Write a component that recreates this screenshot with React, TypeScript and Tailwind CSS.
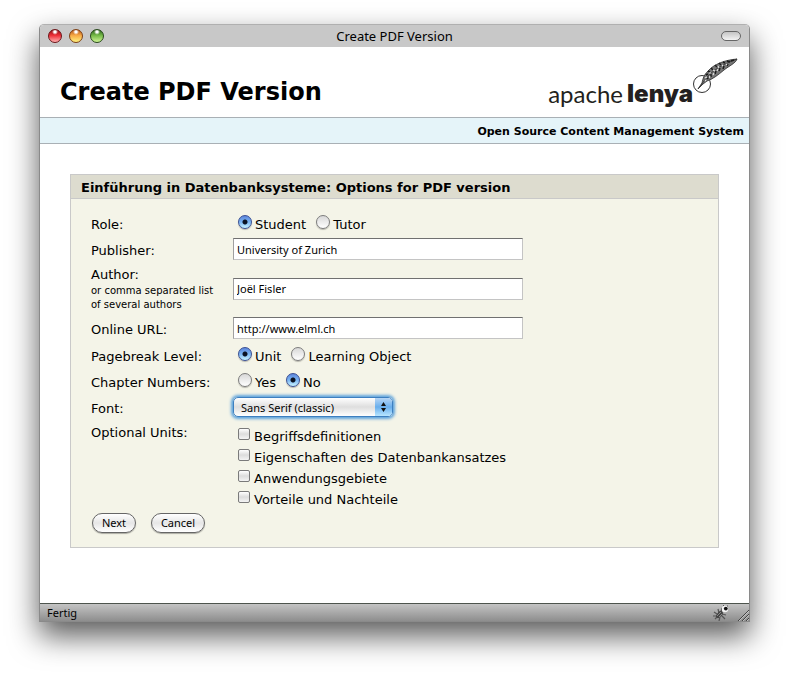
import React, { useState } from "react";

function Radio(props: {
  name: string;
  label: string;
  checked: boolean;
  onSelect: () => void;
}) {
  return (
    <label className="flex items-center gap-[3px] pt-0.5">
      <input
        type="radio"
        name={props.name}
        checked={props.checked}
        onChange={props.onSelect}
        className="mb-1.5 size-3.5 shrink-0 appearance-none rounded-full border border-[#7c7c7c] bg-linear-to-b from-[#d8d8d8] to-white shadow-[0_1px_1px_rgba(0,0,0,0.25)] checked:border-[#3a4f93] checked:bg-[radial-gradient(circle,#0a1222_0_2px,transparent_3px),linear-gradient(#5d86dc,#79b4f2_50%,#c8f4ff)]"
      />
      <span>{props.label}</span>
    </label>
  );
}

function TextBox(props: { id: string; value: string }) {
  const [value, setValue] = useState(props.value);
  return (
    <div className="pb-0.5">
      <input
        id={props.id}
        type="text"
        value={value}
        onChange={(e) => setValue(e.target.value)}
        className="block h-[22px] w-full max-w-[290px] border border-[#c4c4c4] border-t-[#707070] border-l-[#a0a0a0] bg-white px-[3px] font-['Noto_Sans',sans-serif] text-[11px] outline-none"
      />
    </div>
  );
}

function Row(props: {
  label: React.ReactNode;
  children: React.ReactNode;
  className: string;
}) {
  return (
    <div className={`grid grid-cols-[142px_1fr] items-center ${props.className}`}>
      <div className="pt-0.5">{props.label}</div>
      <div className="min-w-0">{props.children}</div>
    </div>
  );
}

function Feather() {
  return (
    <svg viewBox="0 0 48 38" className="h-[38px] w-12" aria-hidden="true">
      <circle cx="11" cy="26" r="8.5" fill="none" stroke="#333" strokeWidth="1" />
      <path
        d="M7 31 L11 25 C12 20 13 17 17 13 C23 6 34 2 46 1 C45 5 38 8 33 12 C27 17 22 21 16 23 L12 26 Z"
        fill="#777"
        stroke="#2b2b2b"
        strokeWidth="0.8"
      />
      <path
        d="M7 31 L13 23 C20 13 30 7 46 1"
        fill="none"
        stroke="#3a3a3a"
        strokeWidth="0.9"
      />
      <path
        d="M15 17l2-1M17 13l2 1M20 10l2 2M24 7l2 2M28 5l2 2M32 4l2 1M36 3l3 1M16 21l2-2M20 19l0-3M24 16l1-3M28 13l1-3M32 11l1-3M36 8l1-2M40 3l3-1"
        stroke="#1d1d1d"
        strokeWidth="1.5"
      />
      <path
        d="M14 20l2-1M18 15l2 0M22 12l2 1M18 20l1-2M22 17l1-2M27 8l1 2M26 13l1-2M31 7l1 1M14 23l1-1M35 6l1 1"
        stroke="#e6e6e6"
        strokeWidth="1.1"
      />
    </svg>
  );
}

function Bug() {
  return (
    <svg viewBox="0 0 16 16" className="size-4" aria-hidden="true">
      <path
        d="M1 7l3 2M0 11h4M2 14l3-3M5 4l1 4M9 3l-1 4M13 10l-4-1M12 14l-4-4M6 16l1-4"
        stroke="#555"
        strokeWidth="1.2"
      />
      <ellipse cx="6.5" cy="9.5" rx="2.4" ry="4.2" transform="rotate(42 6.5 9.5)" fill="#444" />
      <path d="M4 11l4-4M6 12l3-3" stroke="#999" strokeWidth="0.8" />
      <circle cx="12" cy="4" r="3.2" fill="#f5f5f5" />
      <circle cx="12.8" cy="3.6" r="1.9" fill="#111" />
      <path d="M10 1l1-1M14 1l1 0" stroke="#555" />
    </svg>
  );
}

const units = [
  "Begriffsdefinitionen",
  "Eigenschaften des Datenbankansatzes",
  "Anwendungsgebiete",
  "Vorteile und Nachteile",
];

const lights = [
  {
    name: "Close",
    style:
      "border-[#6d1418] bg-[radial-gradient(circle_at_50%_15%,#fff_0_1px,transparent_3px),linear-gradient(#8e1218,#ee2f38_45%,#ffb0b0)]",
  },
  {
    name: "Minimize",
    style:
      "border-[#7d3f12] bg-[radial-gradient(circle_at_50%_15%,#fff_0_1px,transparent_3px),linear-gradient(#b4531a,#f7a945_45%,#fff27e)]",
  },
  {
    name: "Zoom",
    style:
      "border-[#27491a] bg-[radial-gradient(circle_at_50%_15%,#fff_0_1px,transparent_3px),linear-gradient(#2f641f,#74b947_45%,#cff596)]",
  },
];

const pushButton =
  "h-5 rounded-full border border-[#666] bg-linear-to-b from-white via-[#e6e6e6] to-white text-center font-['Noto_Sans',sans-serif] text-[11px] leading-[18px] shadow-[0_1px_1px_rgba(0,0,0,0.3)]";

export default function App() {
  const [role, setRole] = useState("Student");
  const [level, setLevel] = useState("Unit");
  const [chapters, setChapters] = useState("No");

  return (
    <div className="min-h-screen bg-white px-[39px] pt-6 pb-[54px] font-['DejaVu_Sans',Verdana,sans-serif] text-[13px] leading-5 text-black">
      <div className="rounded-t-[5px] border border-[#8a8a8a] border-t-[#b0b0b0] bg-white shadow-[0_14px_30px_rgba(0,0,0,0.65)]">
        <div className="grid h-[22px] grid-cols-[1fr_auto_1fr] items-center rounded-t-[4px] bg-[#c8c8c8] px-2 font-['Noto_Sans',sans-serif]">
          <div className="flex gap-[7px]">
            {lights.map((l) => (
              <button
                key={l.name}
                type="button"
                aria-label={l.name}
                className={`size-3.5 rounded-full border ${l.style}`}
              />
            ))}
          </div>
          <span>Create PDF Version</span>
          <button
            type="button"
            aria-label="Toggle toolbar"
            className="h-2.5 w-5 justify-self-end rounded-full border border-[#666] bg-linear-to-b from-[#c4c4c4] to-[#f4f4f4]"
          />
        </div>

        <header className="flex h-[70px] items-end justify-between pr-2.5 pb-[9px] pl-5">
          <h1 className="text-2xl font-bold">Create PDF Version</h1>
          <div className="flex items-end text-[#231f20]">
            <span className="font-[Lato,sans-serif] text-2xl leading-7 font-normal">apache</span>
            <span className="ml-1 font-[Inter,sans-serif] text-2xl leading-7 font-black">lenya</span>
            <div className="mb-3 -ml-0.5">
              <Feather />
            </div>
          </div>
        </header>

        <div className="border-y border-[#a9b0b5] bg-[#e5f4f9] px-[5px] pt-[3px] pb-px text-right text-[11px] leading-[21px] font-bold">
          Open Source Content Management System
        </div>

        <main className="px-[30px] pt-[30px] pb-[55px]">
          <form
            className="border border-[#c9c9c9] bg-[#f4f4e8]"
            onSubmit={(e) => e.preventDefault()}
          >
            <h2 className="border-b border-[#c9c9c9] bg-[#dddccf] px-2.5 pt-[3px] pb-px text-[13px] leading-[19px] font-bold">
              Einführung in Datenbanksysteme: Options for PDF version
            </h2>

            <div className="px-5 pt-3 pb-3.5">
              <Row label="Role:" className="min-h-[26px]">
                <div role="radiogroup" aria-label="Role" className="flex gap-2.5 pl-[5px]">
                  {["Student", "Tutor"].map((v) => (
                    <Radio key={v} name="role" label={v} checked={role === v} onSelect={() => setRole(v)} />
                  ))}
                </div>
              </Row>
              <Row label={<label htmlFor="publisher">Publisher:</label>} className="min-h-[26px]">
                <TextBox id="publisher" value="University of Zurich" />
              </Row>
              <Row
                label={
                  <label htmlFor="author" className="block pb-1 leading-[18px]">
                    Author:
                    <span className="block text-[10px] leading-3.5">
                      or comma separated list
                      <br />
                      of several authors
                    </span>
                  </label>
                }
                className="min-h-[53px]"
              >
                <TextBox id="author" value="Joël Fisler" />
              </Row>
              <Row label={<label htmlFor="url">Online URL:</label>} className="min-h-[26px]">
                <TextBox id="url" value="http://www.elml.ch" />
              </Row>
              <Row label="Pagebreak Level:" className="min-h-[27px]">
                <div role="radiogroup" aria-label="Pagebreak Level" className="flex gap-2.5 pl-[5px]">
                  {["Unit", "Learning Object"].map((v) => (
                    <Radio key={v} name="level" label={v} checked={level === v} onSelect={() => setLevel(v)} />
                  ))}
                </div>
              </Row>
              <Row label="Chapter Numbers:" className="min-h-[26px]">
                <div role="radiogroup" aria-label="Chapter Numbers" className="flex gap-2.5 pl-[5px]">
                  {["Yes", "No"].map((v) => (
                    <Radio key={v} name="chapters" label={v} checked={chapters === v} onSelect={() => setChapters(v)} />
                  ))}
                </div>
              </Row>
              <Row label={<label htmlFor="font">Font:</label>} className="min-h-[25px]">
                <div className="pb-0.5">
                  <div className="relative w-40">
                    <select
                      id="font"
                      className="block h-5 w-full appearance-none rounded-[5px] border border-[#3d7fc0] bg-linear-to-b from-white via-[#dedede] to-white pr-5 pl-[7px] font-['Noto_Sans',sans-serif] text-[11px] shadow-[0_0_3px_2px_#5ea3dc] outline-none"
                    >
                      <option>Sans Serif (classic)</option>
                    </select>
                    <svg
                      viewBox="0 0 17 18"
                      className="pointer-events-none absolute top-px right-px h-[18px] w-[17px] rounded-r-[4px] bg-linear-to-b from-[#b7d6f5] via-[#69aeec] to-[#b8e6ff]"
                      aria-hidden="true"
                    >
                      <path d="M8.5 4l2.5 4h-5zM8.5 14l2.5-4h-5z" fill="#111" />
                    </svg>
                  </div>
                </div>
              </Row>
              <div className="grid grid-cols-[142px_1fr]">
                <div className="pt-[3px]">Optional Units:</div>
                <div className="pt-1.5 pl-[5px]">
                  {units.map((u) => (
                    <label key={u} className="flex h-[21px] items-center gap-1">
                      <input
                        type="checkbox"
                        className="mb-1.5 size-3 shrink-0 appearance-none rounded-[2px] border border-[#7a7a7a] bg-linear-to-b from-white via-[#dcdcdc] to-[#f4f4f4] checked:bg-[#4a90d9]"
                      />
                      {u}
                    </label>
                  ))}
                </div>
              </div>
              <div className="flex gap-[15px] pt-[3px] pl-px">
                <button type="submit" className={`w-11 ${pushButton}`}>
                  Next
                </button>
                <button type="button" className={`w-[54px] ${pushButton}`}>
                  Cancel
                </button>
              </div>
            </div>
          </form>
        </main>

        <footer className="flex h-[18px] items-center justify-between border-t border-[#4d544d] bg-linear-to-b from-[#c4c4c4] to-[#8e8e8e] pl-[7px] font-['Noto_Sans',sans-serif] text-[11px]">
          <span>Fertig</span>
          <div className="flex items-end gap-2">
            <Bug />
            <svg viewBox="0 0 12 12" className="size-3" aria-hidden="true">
              <path d="M1 12L12 1M5 12l7-7M9 12l3-3" stroke="#444" />
              <path d="M2 12L12 2M6 12l6-6M10 12l2-2" stroke="#ddd" strokeWidth="0.6" />
            </svg>
          </div>
        </footer>
      </div>
    </div>
  );
}
